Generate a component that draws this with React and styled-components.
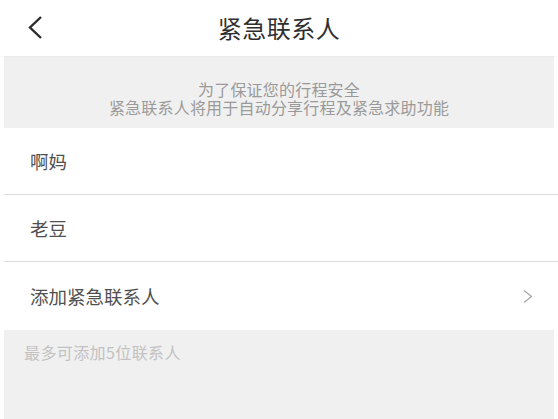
import React from 'react';
import styled, { createGlobalStyle } from 'styled-components';

const contacts = ['啊妈', '老豆'];

export default function App() {
  return (
    <>
      <GlobalStyle />
      <Page>
        <Header>
          <BackButton aria-label='返回'>
            <svg width='16' height='25' viewBox='0 0 16 25' fill='none'>
              <path d='M14 2L3 12.5L14 23' stroke='#2b2b2b' strokeWidth='2.4' />
            </svg>
          </BackButton>
          <Title>紧急联系人</Title>
        </Header>
        <Notice>
          <div>为了保证您的行程安全</div>
          <div>紧急联系人将用于自动分享行程及紧急求助功能</div>
        </Notice>
        <List>
          {contacts.map((name) => (
            <Row key={name}>
              <Label>{name}</Label>
            </Row>
          ))}
          <Row>
            <Label>添加紧急联系人</Label>
            <svg width='12' height='15' viewBox='0 0 12 15' fill='none'>
              <path d='M2 1.5L9.5 7.5L2 13.5' stroke='#a8a8a8' strokeWidth='1.3' />
            </svg>
          </Row>
        </List>
        <Footer>最多可添加5位联系人</Footer>
      </Page>
    </>
  );
}

const GlobalStyle = createGlobalStyle`
  html, body {
    margin: 0;
    padding: 0;
    background: #fff;
  }
  body {
    font-family: 'Noto Sans CJK SC', 'Noto Sans', sans-serif;
  }
`;

const Page = styled.div`
  display: flex;
  flex-direction: column;
  min-height: 100vh;
  background: #fff;
`;

const Header = styled.div`
  position: relative;
  display: flex;
  align-items: center;
  justify-content: center;
  height: 56px;
  background: #fff;
  box-shadow: 0 1px 2px rgba(0, 0, 0, 0.04);
`;

const BackButton = styled.div`
  position: absolute;
  left: 27px;
  top: 15px;
  display: flex;
`;

const Title = styled.h1`
  margin: 0;
  font-size: 24px;
  font-weight: 400;
  color: #2e2e2e;
  letter-spacing: 0.5px;
  line-height: 1;
`;

const Notice = styled.div`
  margin: 0 4px;
  padding: 24px 0 12px;
  background: #f0f0f0;
  text-align: center;
  font-size: 16px;
  line-height: 18px;
  color: #9a9a9a;
  letter-spacing: 0.2px;
`;

const List = styled.div`
  background: #fff;
`;

const Row = styled.div`
  display: flex;
  align-items: center;
  justify-content: space-between;
  height: 66px;
  padding: 0 24px 0 30px;
  border-bottom: 1px solid #dcdcdc;
  margin-left: 4px;

  &:last-child {
    border-bottom: none;
    height: 68px;
  }
`;

const Label = styled.span`
  font-size: 18.5px;
  color: #505050;
  margin-left: -4px;
`;

const Footer = styled.div`
  flex: 1;
  margin: 0 4px;
  padding: 12px 0 0 20px;
  background: #f0f0f0;
  font-size: 16px;
  line-height: 20px;
  color: #c2c2c2;
  letter-spacing: 0.4px;
`;
